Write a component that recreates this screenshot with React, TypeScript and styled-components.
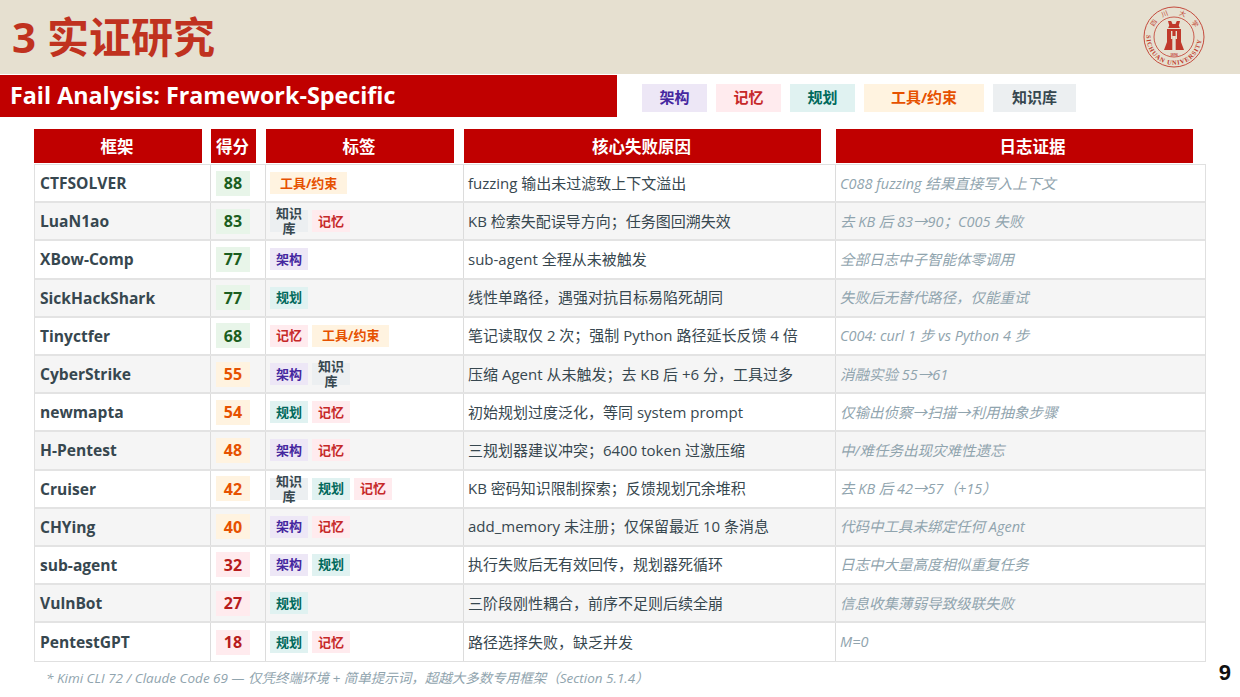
import React from 'react';
import styled, { createGlobalStyle } from 'styled-components';

const FONT = `"Open Sans", "Noto Sans CJK SC", sans-serif`;

const GlobalStyle = createGlobalStyle`
  html, body {
    margin: 0;
    padding: 0;
    background: #fff;
  }
  body {
    font-family: ${FONT};
    overflow: hidden;
  }
`;

type TagKind = 'arch' | 'mem' | 'plan' | 'tool' | 'kb';
type Level = 'high' | 'mid' | 'low';

const TAGS: Record<TagKind, { label: string; fg: string; bg: string }> = {
  arch: { label: '架构', fg: '#4527a0', bg: '#ede7f6' },
  mem: { label: '记忆', fg: '#c62828', bg: '#ffebee' },
  plan: { label: '规划', fg: '#00695c', bg: '#e0f2f1' },
  tool: { label: '工具/约束', fg: '#e65100', bg: '#fff3e0' },
  kb: { label: '知识库', fg: '#37474f', bg: '#eceff1' },
};

const LEVELS: Record<Level, { fg: string; bg: string }> = {
  high: { fg: '#1b5e20', bg: '#e8f5e9' },
  mid: { fg: '#e65100', bg: '#fff3e0' },
  low: { fg: '#b71c1c', bg: '#ffebee' },
};

const ROWS: { name: string; score: number; level: Level; tags: TagKind[]; cause: string; log: string }[] = [
  { name: 'CTFSOLVER', score: 88, level: 'high', tags: ['tool'], cause: 'fuzzing 输出未过滤致上下文溢出', log: 'C088 fuzzing 结果直接写入上下文' },
  { name: 'LuaN1ao', score: 83, level: 'high', tags: ['kb', 'mem'], cause: 'KB 检索失配误导方向；任务图回溯失效', log: '去 KB 后 83→90；C005 失败' },
  { name: 'XBow-Comp', score: 77, level: 'high', tags: ['arch'], cause: 'sub-agent 全程从未被触发', log: '全部日志中子智能体零调用' },
  { name: 'SickHackShark', score: 77, level: 'high', tags: ['plan'], cause: '线性单路径，遇强对抗目标易陷死胡同', log: '失败后无替代路径，仅能重试' },
  { name: 'Tinyctfer', score: 68, level: 'high', tags: ['mem', 'tool'], cause: '笔记读取仅 2 次；强制 Python 路径延长反馈 4 倍', log: 'C004: curl 1 步 vs Python 4 步' },
  { name: 'CyberStrike', score: 55, level: 'mid', tags: ['arch', 'kb'], cause: '压缩 Agent 从未触发；去 KB 后 +6 分，工具过多', log: '消融实验 55→61' },
  { name: 'newmapta', score: 54, level: 'mid', tags: ['plan', 'mem'], cause: '初始规划过度泛化，等同 system prompt', log: '仅输出侦察→扫描→利用抽象步骤' },
  { name: 'H-Pentest', score: 48, level: 'mid', tags: ['arch', 'mem'], cause: '三规划器建议冲突；6400 token 过激压缩', log: '中/难任务出现灾难性遗忘' },
  { name: 'Cruiser', score: 42, level: 'mid', tags: ['kb', 'plan', 'mem'], cause: 'KB 密码知识限制探索；反馈规划冗余堆积', log: '去 KB 后 42→57（+15）' },
  { name: 'CHYing', score: 40, level: 'mid', tags: ['arch', 'mem'], cause: 'add_memory 未注册；仅保留最近 10 条消息', log: '代码中工具未绑定任何 Agent' },
  { name: 'sub-agent', score: 32, level: 'low', tags: ['arch', 'plan'], cause: '执行失败后无有效回传，规划器死循环', log: '日志中大量高度相似重复任务' },
  { name: 'VulnBot', score: 27, level: 'low', tags: ['plan'], cause: '三阶段刚性耦合，前序不足则后续全崩', log: '信息收集薄弱导致级联失败' },
  { name: 'PentestGPT', score: 18, level: 'low', tags: ['plan', 'mem'], cause: '路径选择失败，缺乏并发', log: 'M=0' },
];

// the last heading sits right of the middle of its cell, as in the slide
const HEADERS = [
  { label: '框架', width: 168, inset: 0 },
  { label: '得分', width: 45, inset: 0 },
  { label: '标签', width: 188, inset: 0 },
  { label: '核心失败原因', width: 357, inset: 0 },
  { label: '日志证据', width: 357, inset: 38 },
];

const SEAL_CHARS = [
  { char: '四', angle: -55 },
  { char: '川', angle: -22 },
  { char: '大', angle: 20 },
  { char: '学', angle: 58 },
];

const COLUMNS = '177px 55px 198px 372px 370px';

const Slide = styled.div`
  width: 1240px;
  height: 697px;
  overflow: hidden;
  display: flex;
  flex-direction: column;
`;

const Banner = styled.header`
  height: 74px;
  flex: none;
  background: #e6e0d0;
  display: flex;
  align-items: center;
  justify-content: space-between;
  padding: 0 35px 0 12px;
`;

const Title = styled.h1`
  margin: 0;
  font-size: 42px;
  line-height: 74px;
  font-weight: 700;
  color: #c0321f;
`;

const SubRow = styled.div`
  height: 42px;
  flex: none;
  margin-top: 1px;
  display: flex;
  align-items: flex-start;
`;

const SubTitle = styled.h2`
  margin: 0;
  width: 617px;
  height: 42px;
  box-sizing: border-box;
  padding-left: 10px;
  background: #c00000;
  color: #fff;
  font-size: 23.3px;
  line-height: 40px;
  font-weight: 700;
`;

const Legend = styled.div`
  margin: 9px 0 0 25px;
  display: flex;
  gap: 9px;
`;

const LegendChip = styled.span<{ $kind: TagKind; $width: number }>`
  width: ${(p) => p.$width}px;
  height: 28px;
  box-sizing: border-box;
  padding-bottom: 3px;
  display: flex;
  align-items: center;
  justify-content: center;
  font-size: 15px;
  font-weight: 700;
  color: ${(p) => TAGS[p.$kind].fg};
  background: ${(p) => TAGS[p.$kind].bg};
`;

const Table = styled.section`
  width: 1172px;
  margin: 12px 0 0 34px;
`;

const HeadRow = styled.div`
  display: grid;
  grid-template-columns: ${COLUMNS};
  height: 34px;
`;

const HeadCell = styled.div<{ $width: number; $inset: number }>`
  width: ${(p) => p.$width}px;
  box-sizing: border-box;
  padding: 0 2px 0 ${(p) => p.$inset}px;
  background: #c00000;
  color: #fff;
  font-size: 16.5px;
  font-weight: 700;
  display: flex;
  align-items: center;
  justify-content: center;
`;

const Body = styled.div`
  margin-top: 1px;
  border: 1px solid #e0e0e0;
`;

const Row = styled.div<{ $odd: boolean }>`
  display: grid;
  grid-template-columns: 176px 55px 198px 372px 369px;
  height: 38.2px;
  box-sizing: border-box;
  border-bottom: 2px solid #e3e3e3;
  background: ${(p) => (p.$odd ? '#f5f5f5' : '#fff')};

  &:last-child {
    border-bottom: none;
  }
`;

const Cell = styled.div`
  display: flex;
  align-items: center;
  min-width: 0;
  box-sizing: border-box;
  padding-left: 4px;
  border-right: 1px solid #dcdcdc;
  white-space: nowrap;

  &:last-child {
    border-right: none;
  }
`;

const Name = styled(Cell)`
  padding-left: 5px;
  font-size: 15.6px;
  font-weight: 700;
  color: #37474f;
`;

const ScoreCell = styled(Cell)`
  padding-left: 5px;
`;

const Score = styled.span<{ $level: Level }>`
  width: 34px;
  height: 25px;
  display: flex;
  align-items: center;
  justify-content: center;
  font-size: 16px;
  font-weight: 700;
  color: ${(p) => LEVELS[p.$level].fg};
  background: ${(p) => LEVELS[p.$level].bg};
`;

const Tags = styled(Cell)`
  gap: 4px;
`;

const Tag = styled.span<{ $kind: TagKind }>`
  flex: none;
  min-width: 38px;
  height: 22px;
  max-width: ${(p) => (p.$kind === 'kb' ? '38px' : 'none')};
  box-sizing: border-box;
  padding: 0 ${(p) => (p.$kind === 'kb' ? '3px' : p.$kind === 'tool' ? '10px' : '6px')};
  display: flex;
  align-items: center;
  justify-content: center;
  text-align: center;
  white-space: normal;
  font-size: 13px;
  line-height: 15px;
  font-weight: 700;
  color: ${(p) => TAGS[p.$kind].fg};
  background: ${(p) => TAGS[p.$kind].bg};
`;

const Cause = styled(Cell)`
  padding-bottom: 2px;
  font-size: 15px;
  color: #37474f;
`;

const Evidence = styled(Cell)`
  padding-bottom: 2px;
  font-size: 14.5px;
  font-style: italic;
  color: #90a4ae;
`;

const Footer = styled.footer`
  flex: 1;
  display: flex;
  justify-content: space-between;
  padding: 2px 9px 0 46px;
`;

const Note = styled.p`
  margin: 5px 0 0;
  font-size: 13.5px;
  line-height: 18px;
  font-style: italic;
  color: #90a4ae;
`;

const PageNo = styled.span`
  font-family: "Liberation Sans", sans-serif;
  font-size: 22px;
  line-height: 20px;
  font-weight: 700;
  color: #111;
  margin-top: -1px;
`;

const Seal: React.FC = () => (
  <svg width="62" height="62" viewBox="0 0 62 62" aria-label="Sichuan University">
    <g fill="none" stroke="#c0392b">
      <circle cx="31" cy="31" r="30" strokeWidth="0.9" />
      <circle cx="31" cy="31" r="20" strokeWidth="0.8" />
    </g>
    <defs>
      <path id="sealBottom" d="M3.6 29 A27.5 27.5 0 1 0 58.4 29" />
    </defs>
    <text fontFamily="'Liberation Serif', serif" fontSize="6.4" fontWeight="700" fill="#c0392b">
      <textPath href="#sealBottom" textLength="86" lengthAdjust="spacing">SICHUAN UNIVERSITY</textPath>
    </text>
    {SEAL_CHARS.map((c) => (
      <text
        key={c.char}
        x="31"
        y="8.5"
        textAnchor="middle"
        transform={`rotate(${c.angle} 31 31)`}
        fontFamily="'Noto Sans CJK SC', sans-serif"
        fontSize="6.5"
        fill="#c0392b"
      >
        {c.char}
      </text>
    ))}
    <path
      fill="#c0392b"
      fillRule="evenodd"
      d="M25 15h3.2l1.3 3h3l1.3-3H37l-1.2 4.4 1 2.6H25.2l1-2.6zM24 23h14v13l3 8h-8.3v-14h-3.4v14H21l3-8zM28 25v8h1.4v-8zM32.6 25v8H34v-8z"
    />
    <text x="31" y="49.5" textAnchor="middle" fontFamily="'Liberation Serif', serif" fontSize="3.8" fontWeight="700" fill="#c0392b">
      1896
    </text>
  </svg>
);

export default function App() {
  return (
    <Slide>
      <GlobalStyle />
      <Banner>
        <Title>3 实证研究</Title>
        <Seal />
      </Banner>
      <SubRow>
        <SubTitle>Fail Analysis: Framework-Specific</SubTitle>
        <Legend>
          <LegendChip $kind="arch" $width={65}>架构</LegendChip>
          <LegendChip $kind="mem" $width={65}>记忆</LegendChip>
          <LegendChip $kind="plan" $width={65}>规划</LegendChip>
          <LegendChip $kind="tool" $width={120}>工具/约束</LegendChip>
          <LegendChip $kind="kb" $width={83}>知识库</LegendChip>
        </Legend>
      </SubRow>
      <Table>
        <HeadRow>
          {HEADERS.map((h) => (
            <HeadCell key={h.label} $width={h.width} $inset={h.inset}>{h.label}</HeadCell>
          ))}
        </HeadRow>
        <Body>
          {ROWS.map((row, i) => (
            <Row key={row.name} $odd={i % 2 === 1}>
              <Name>{row.name}</Name>
              <ScoreCell>
                <Score $level={row.level}>{row.score}</Score>
              </ScoreCell>
              <Tags>
                {row.tags.map((t) => (
                  <Tag key={t} $kind={t}>{TAGS[t].label}</Tag>
                ))}
              </Tags>
              <Cause>{row.cause}</Cause>
              <Evidence>{row.log}</Evidence>
            </Row>
          ))}
        </Body>
      </Table>
      <Footer>
        <Note>* Kimi CLI 72 / Claude Code 69 — 仅凭终端环境 + 简单提示词，超越大多数专用框架（Section 5.1.4）</Note>
        <PageNo>9</PageNo>
      </Footer>
    </Slide>
  );
}
